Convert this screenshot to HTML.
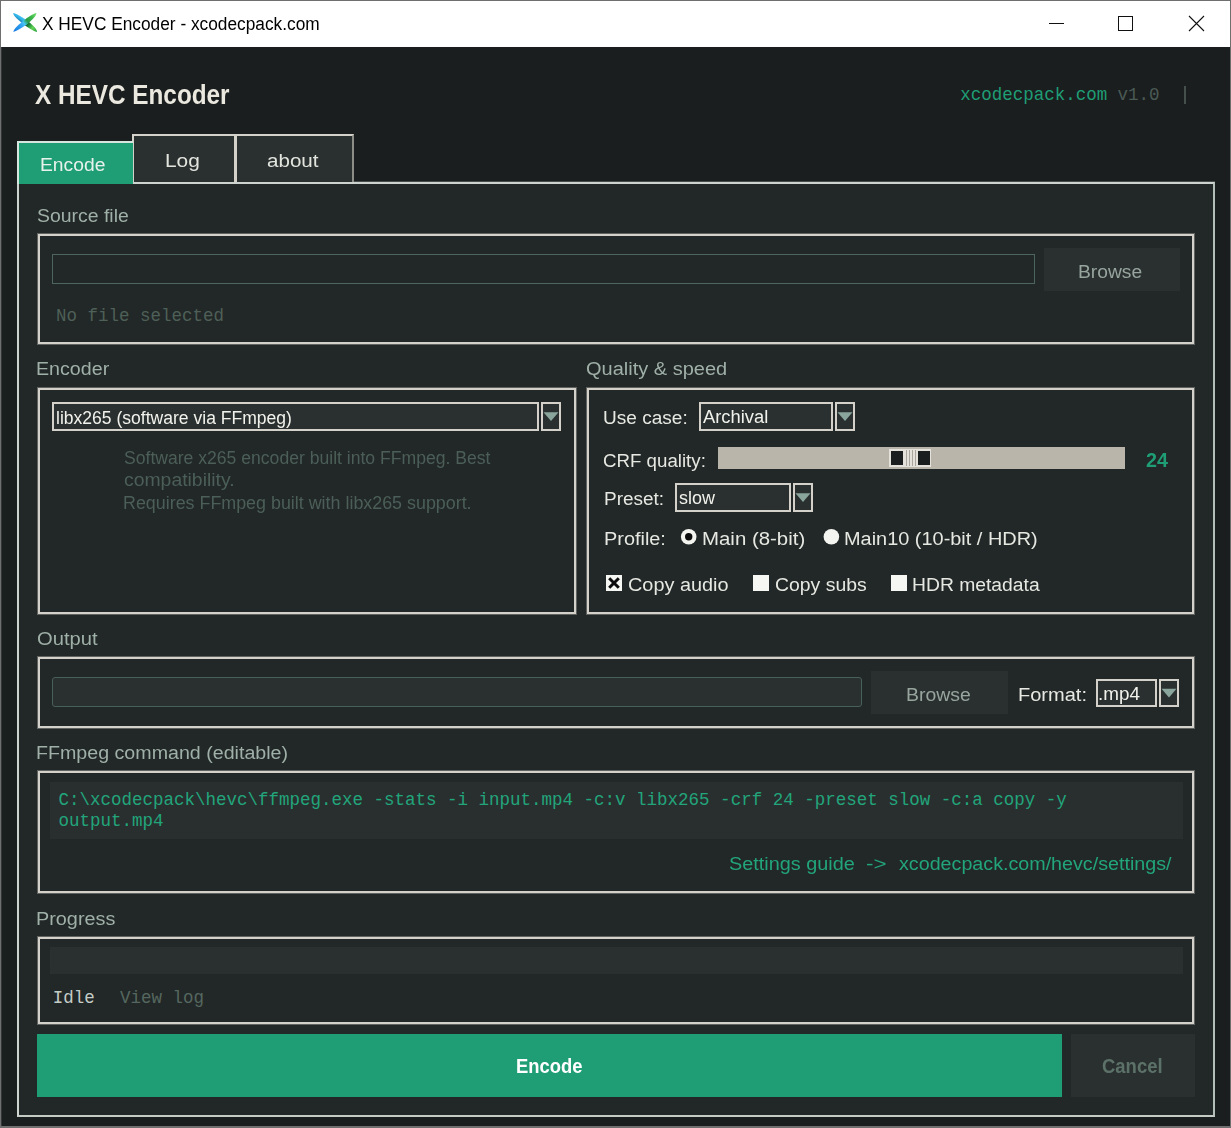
<!DOCTYPE html>
<html><head><meta charset="utf-8"><title>X HEVC Encoder</title>
<style>
html,body{margin:0;padding:0;background:#1a1e1f;overflow:hidden;}
#w{position:relative;width:1231px;height:1128px;overflow:hidden;background:#1a1e1f;font-family:"Liberation Sans", sans-serif;}
#w div{position:absolute;}
.t{position:absolute;white-space:pre;line-height:1;transform-origin:0 50%;}
.fr{border:2px solid #d3d1c9;box-sizing:border-box;box-shadow:0 0 0 1px rgba(200,198,190,.38);}
.cbf{background:#2a3030;border:2px solid #d3d1c9;box-sizing:border-box;}
.cba{background:#2a3030;border:2px solid #d3d1c9;box-sizing:border-box;}
.wb{background:#6f6f6f;}
.s{font-family:"Liberation Sans", sans-serif;}
.m{font-family:"Liberation Mono", monospace;}
</style></head>
<body>
<div id="w">
<div class="" style="left:1px;top:1px;width:1229px;height:46px;background:#fff"></div>
<svg style="position:absolute;left:0;top:0" width="50" height="46" viewBox="0 0 50 46">
<defs>
<linearGradient id="g1" gradientUnits="userSpaceOnUse" x1="22" y1="14" x2="17" y2="21"><stop offset="0" stop-color="#5fd6fa"/><stop offset=".55" stop-color="#2fb2e6"/><stop offset="1" stop-color="#0d5f9a"/></linearGradient>
<linearGradient id="g2" gradientUnits="userSpaceOnUse" x1="25" y1="23" x2="37" y2="32"><stop offset="0" stop-color="#04302e"/><stop offset=".3" stop-color="#1f8a38"/><stop offset=".6" stop-color="#62d456"/><stop offset="1" stop-color="#2a9a3e"/></linearGradient>
<linearGradient id="g3" gradientUnits="userSpaceOnUse" x1="13.6" y1="31.9" x2="27" y2="21"><stop offset="0" stop-color="#1a78dc"/><stop offset=".5" stop-color="#2a9cf0"/><stop offset="1" stop-color="#5edcfc"/></linearGradient>
<linearGradient id="g4" gradientUnits="userSpaceOnUse" x1="24" y1="23" x2="36.2" y2="13"><stop offset="0" stop-color="#3fc8e0"/><stop offset=".25" stop-color="#2a9a4a"/><stop offset=".6" stop-color="#3cb848"/><stop offset="1" stop-color="#7ae070"/></linearGradient>
<filter id="ib" x="-10%" y="-10%" width="120%" height="120%"><feGaussianBlur stdDeviation="0.35"/></filter>
</defs>
<g filter="url(#ib)">
<path d="M13.20 13.00 C13.30 16.12 18.87 20.58 24.76 25.17 L27.84 21.23 C21.94 16.64 15.51 13.28 13.20 13.00 Z" fill="url(#g1)"/>
<path d="M37.00 31.90 C37.03 28.83 31.76 24.41 26.18 19.86 L23.02 23.74 C28.60 28.28 34.75 31.62 37.00 31.90 Z" fill="url(#g2)"/>
<path d="M13.40 31.90 C15.69 31.60 22.01 28.18 27.77 23.55 L24.63 19.65 C18.87 24.29 13.43 28.79 13.40 31.90 Z" fill="url(#g3)"/>
<path d="M36.40 13.00 C34.18 13.31 28.18 16.71 22.78 21.30 L26.02 25.10 C31.42 20.51 36.51 16.05 36.40 13.00 Z" fill="url(#g4)"/>
</g>
</svg>
<div class="" style="left:1049px;top:23px;width:15px;height:1px;background:#111"></div>
<div class="" style="left:1118px;top:16px;width:15px;height:15px;border:1px solid #111;box-sizing:border-box"></div>
<svg style="position:absolute;left:1188px;top:15px" width="17" height="17" viewBox="0 0 17 17"><path d="M1 1 L16 16 M16 1 L1 16" stroke="#111" stroke-width="1.1" fill="none"/></svg>
<div class="" style="left:1184px;top:86px;width:2px;height:18px;background:#454f4c"></div>
<div class="" style="left:17px;top:182px;width:1198px;height:935px;background:#222727;border:2px solid #cdd4d0;box-sizing:border-box;border-right-color:#b4beb9;border-bottom-color:#c4cac4;box-shadow:0 -1px 0 rgba(205,212,208,.25)"></div>
<div class="" style="left:132px;top:134px;width:103px;height:49px;background:#2a2f2f;border:2px solid #d3d1c9;border-bottom:none;border-right-width:1px;box-sizing:border-box"></div>
<div class="" style="left:235px;top:134px;width:119px;height:49px;background:#2a2f2f;border:2px solid #d3d1c9;border-bottom:none;border-right-color:#8e8e88;box-sizing:border-box"></div>
<div class="" style="left:132px;top:182px;width:222px;height:2px;background:#cdd4d0"></div>
<div class="" style="left:17px;top:141px;width:116px;height:43px;background:#1f9d75;border:2px solid #d6e6de;border-bottom:none;border-right:none;box-sizing:border-box"></div>
<div class="fr" style="left:38px;top:234px;width:1156px;height:110px;"></div>
<div class="" style="left:52px;top:254px;width:983px;height:30px;border:1px solid #4c655e;box-sizing:border-box"></div>
<div class="" style="left:1043.5px;top:248px;width:136.5px;height:43px;background:#2a3030"></div>
<div class="fr" style="left:38px;top:388px;width:538px;height:226px;"></div>
<div class="cbf" style="left:52px;top:402px;width:487px;height:29px;"></div><div class="cba" style="left:541px;top:402px;width:20px;height:29px;"><svg width="20" height="29" viewBox="0 0 20 29" style="position:absolute;left:-2px;top:-2px"><path d="M2.5 10.3 L17.5 10.3 L10.0 19.1 Z" fill="#8aa59b"/></svg></div>
<div class="fr" style="left:587px;top:388px;width:607px;height:226px;"></div>
<div class="cbf" style="left:699px;top:402px;width:134px;height:29px;"></div><div class="cba" style="left:835px;top:402px;width:20px;height:29px;"><svg width="20" height="29" viewBox="0 0 20 29" style="position:absolute;left:-2px;top:-2px"><path d="M2.5 10.3 L17.5 10.3 L10.0 19.1 Z" fill="#8aa59b"/></svg></div>
<div class="cbf" style="left:675px;top:483px;width:116px;height:29px;"></div><div class="cba" style="left:793px;top:483px;width:20px;height:29px;"><svg width="20" height="29" viewBox="0 0 20 29" style="position:absolute;left:-2px;top:-2px"><path d="M2.5 10.3 L17.5 10.3 L10.0 19.1 Z" fill="#8aa59b"/></svg></div>
<div class="" style="left:718px;top:447px;width:407px;height:22px;background:#bab5ab"></div>
<div class="" style="left:889px;top:449px;width:42px;height:18px;background:#e4e2da"></div>
<div class="" style="left:891px;top:451px;width:12px;height:14px;background:#1a1e1f"></div>
<div class="" style="left:918px;top:451px;width:11.5px;height:14px;background:#1a1e1f"></div>
<div class="" style="left:905.5px;top:450px;width:1.2999999999999545px;height:16px;background:#aaa69d"></div>
<div class="" style="left:908.7px;top:450px;width:1.2999999999999545px;height:16px;background:#aaa69d"></div>
<div class="" style="left:912px;top:450px;width:1.2999999999999545px;height:16px;background:#aaa69d"></div>
<div class="" style="left:915.2px;top:450px;width:1.2999999999999545px;height:16px;background:#aaa69d"></div>
<svg style="position:absolute;left:679px;top:527px" width="20" height="20"><circle cx="9.7" cy="9.7" r="7.8" fill="#f4f4f0"/><circle cx="9.7" cy="9.7" r="3.7" fill="#0c0c0c"/></svg>
<svg style="position:absolute;left:822px;top:527px" width="20" height="20"><circle cx="9.4" cy="9.7" r="7.8" fill="#f4f4f0"/></svg>
<div class="" style="left:606px;top:575px;width:16px;height:16px;background:#f6f6f2"><svg width="16" height="16" viewBox="0 0 16 16" style="position:absolute;left:0;top:0"><path d="M3.2 3.2 L12.8 12.8 M12.8 3.2 L3.2 12.8" stroke="#0c0c0c" stroke-width="3" fill="none"/></svg></div>
<div class="" style="left:752.5px;top:575px;width:16.0px;height:16px;background:#f6f6f2"></div>
<div class="" style="left:891px;top:575px;width:16px;height:16px;background:#f6f6f2"></div>
<div class="fr" style="left:38px;top:657px;width:1156px;height:71px;"></div>
<div class="" style="left:52px;top:677px;width:810px;height:29.5px;background:#2a3030;border:1px solid #48605a;box-sizing:border-box;border-radius:3px"></div>
<div class="" style="left:871px;top:671px;width:137px;height:43px;background:#2a3030"></div>
<div class="cbf" style="left:1096px;top:679px;width:61px;height:28px;"></div><div class="cba" style="left:1159px;top:679px;width:20px;height:28px;"><svg width="20" height="28" viewBox="0 0 20 28" style="position:absolute;left:-2px;top:-2px"><path d="M2.5 9.8 L17.5 9.8 L10.0 18.6 Z" fill="#8aa59b"/></svg></div>
<div class="fr" style="left:38px;top:771px;width:1156px;height:122px;"></div>
<div class="" style="left:49.5px;top:782px;width:1133.5px;height:56.5px;background:#292f2f"></div>
<div class="fr" style="left:38px;top:937px;width:1156px;height:87px;"></div>
<div class="" style="left:49.5px;top:947px;width:1133.5px;height:26.5px;background:#2a3030"></div>
<div class="" style="left:37px;top:1034px;width:1025px;height:63px;background:#1f9d75"></div>
<div class="" style="left:1070.5px;top:1034px;width:124.5px;height:63px;background:#2a3030"></div>
<span class="t s" style="left:41.81px;top:15.90px;font-size:17.6px;font-weight:400;color:#000;transform:scaleX(0.9828);">X HEVC Encoder - xcodecpack.com</span>
<span class="t s" style="left:34.79px;top:82.24px;font-size:27px;font-weight:700;color:#ebe9df;transform:scaleX(0.9006);">X HEVC Encoder</span>
<span class="t m" style="left:960.20px;top:86.73px;font-size:17.5px;font-weight:400;color:#1f9d75;">xcodecpack.com</span>
<span class="t m" style="left:1117.41px;top:86.73px;font-size:17.5px;font-weight:400;color:#4a5a55;">v1.0</span>
<span class="t s" style="left:40.42px;top:155.86px;font-size:18px;font-weight:400;color:#e8f2ec;transform:scaleX(1.0717);">Encode</span>
<span class="t s" style="left:165.09px;top:151.56px;font-size:18px;font-weight:400;color:#e2e4de;transform:scaleX(1.1602);">Log</span>
<span class="t s" style="left:267.13px;top:151.86px;font-size:18px;font-weight:400;color:#e2e4de;transform:scaleX(1.1438);">about</span>
<span class="t s" style="left:36.62px;top:207.36px;font-size:18px;font-weight:400;color:#9fb0a8;transform:scaleX(1.0788);">Source file</span>
<span class="t s" style="left:35.89px;top:360.11px;font-size:18px;font-weight:400;color:#9fb0a8;transform:scaleX(1.0916);">Encoder</span>
<span class="t s" style="left:36.54px;top:630.36px;font-size:18px;font-weight:400;color:#9fb0a8;transform:scaleX(1.1213);">Output</span>
<span class="t s" style="left:35.89px;top:743.86px;font-size:18px;font-weight:400;color:#9fb0a8;transform:scaleX(1.0908);">FFmpeg command (editable)</span>
<span class="t s" style="left:35.87px;top:909.61px;font-size:18px;font-weight:400;color:#9fb0a8;transform:scaleX(1.1015);">Progress</span>
<span class="t s" style="left:586.05px;top:360.36px;font-size:18px;font-weight:400;color:#9fb0a8;transform:scaleX(1.1114);">Quality &amp; speed</span>
<span class="t m" style="left:55.92px;top:307.78px;font-size:17.5px;font-weight:400;color:#4e6058;">No file selected</span>
<span class="t s" style="left:1078.42px;top:262.86px;font-size:18px;font-weight:400;color:#97a59e;transform:scaleX(1.0692);">Browse</span>
<span class="t s" style="left:56.12px;top:408.86px;font-size:18px;font-weight:400;color:#f2f2ec;transform:scaleX(0.9747);">libx265 (software via FFmpeg)</span>
<span class="t s" style="left:123.70px;top:449.79px;font-size:17.5px;font-weight:400;color:#4b5f58;transform:scaleX(1.0045);">Software x265 encoder built into FFmpeg. Best</span>
<span class="t s" style="left:123.68px;top:472.29px;font-size:17.5px;font-weight:400;color:#4b5f58;transform:scaleX(1.1075);">compatibility.</span>
<span class="t s" style="left:123.03px;top:494.79px;font-size:17.5px;font-weight:400;color:#4b5f58;transform:scaleX(1.0210);">Requires FFmpeg built with libx265 support.</span>
<span class="t s" style="left:603.03px;top:409.36px;font-size:18px;font-weight:400;color:#e6e8e2;transform:scaleX(1.0582);">Use case:</span>
<span class="t s" style="left:702.96px;top:408.36px;font-size:18px;font-weight:400;color:#f2f2ec;transform:scaleX(1.0192);">Archival</span>
<span class="t s" style="left:602.85px;top:451.66px;font-size:18px;font-weight:400;color:#e6e8e2;transform:scaleX(1.0386);">CRF quality:</span>
<span class="t s" style="left:1146.11px;top:451.01px;font-size:19.6px;font-weight:700;color:#1f9d75;transform:scaleX(1.0089);">24</span>
<span class="t s" style="left:603.64px;top:490.36px;font-size:18px;font-weight:400;color:#e6e8e2;transform:scaleX(1.0536);">Preset:</span>
<span class="t s" style="left:679.00px;top:489.11px;font-size:18px;font-weight:400;color:#f2f2ec;transform:scaleX(0.9984);">slow</span>
<span class="t s" style="left:603.67px;top:529.56px;font-size:18px;font-weight:400;color:#e6e8e2;transform:scaleX(1.1047);">Profile:</span>
<span class="t s" style="left:702.08px;top:529.86px;font-size:18px;font-weight:400;color:#e6e8e2;transform:scaleX(1.1336);">Main (8-bit)</span>
<span class="t s" style="left:844.37px;top:529.86px;font-size:18px;font-weight:400;color:#e6e8e2;transform:scaleX(1.1063);">Main10 (10-bit / HDR)</span>
<span class="t s" style="left:627.74px;top:576.11px;font-size:18px;font-weight:400;color:#e6e8e2;transform:scaleX(1.1045);">Copy audio</span>
<span class="t s" style="left:774.76px;top:576.11px;font-size:18px;font-weight:400;color:#e6e8e2;transform:scaleX(1.0781);">Copy subs</span>
<span class="t s" style="left:912.02px;top:576.36px;font-size:18px;font-weight:400;color:#e6e8e2;transform:scaleX(1.0724);">HDR metadata</span>
<span class="t s" style="left:905.71px;top:686.36px;font-size:18px;font-weight:400;color:#97a59e;transform:scaleX(1.0787);">Browse</span>
<span class="t s" style="left:1018.36px;top:686.36px;font-size:18px;font-weight:400;color:#e6e8e2;transform:scaleX(1.1121);">Format:</span>
<span class="t s" style="left:1098.08px;top:685.16px;font-size:18px;font-weight:400;color:#f2f2ec;transform:scaleX(1.0486);">.mp4</span>
<span class="t m" style="left:58.53px;top:791.98px;font-size:17.5px;font-weight:400;color:#22a57b;">C:\xcodecpack\hevc\ffmpeg.exe -stats -i input.mp4 -c:v libx265 -crf 24 -preset slow -c:a copy -y</span>
<span class="t m" style="left:58.39px;top:813.23px;font-size:17.5px;font-weight:400;color:#22a57b;">output.mp4</span>
<span class="t s" style="left:729.10px;top:854.76px;font-size:18px;font-weight:400;color:#22a57b;transform:scaleX(1.1025);">Settings guide</span>
<span class="t s" style="left:866.01px;top:854.76px;font-size:18px;font-weight:400;color:#22a57b;transform:scaleX(1.2402);">-&gt;</span>
<span class="t s" style="left:899.48px;top:854.76px;font-size:18px;font-weight:400;color:#22a57b;transform:scaleX(1.0939);">xcodecpack.com/hevc/settings/</span>
<span class="t m" style="left:52.77px;top:990.28px;font-size:17.5px;font-weight:400;color:#c4ccc7;">Idle</span>
<span class="t m" style="left:119.91px;top:990.28px;font-size:17.5px;font-weight:400;color:#55675f;">View log</span>
<span class="t s" style="left:515.57px;top:1056.61px;font-size:19.6px;font-weight:700;color:#fff;transform:scaleX(0.9390);">Encode</span>
<span class="t s" style="left:1101.54px;top:1056.61px;font-size:19.6px;font-weight:700;color:#5c7269;transform:scaleX(0.9424);">Cancel</span>
<div class="wb" style="left:0px;top:0px;width:1231px;height:1px;"></div><div class="wb" style="left:0px;top:0px;width:1px;height:1128px;"></div><div class="" style="left:1px;top:47px;width:1px;height:1079px;background:#33383a"></div><div class="wb" style="left:1230px;top:0px;width:1px;height:1128px;"></div><div class="wb" style="left:0px;top:1126px;width:1231px;height:2px;"></div>
</div>
</body></html>
